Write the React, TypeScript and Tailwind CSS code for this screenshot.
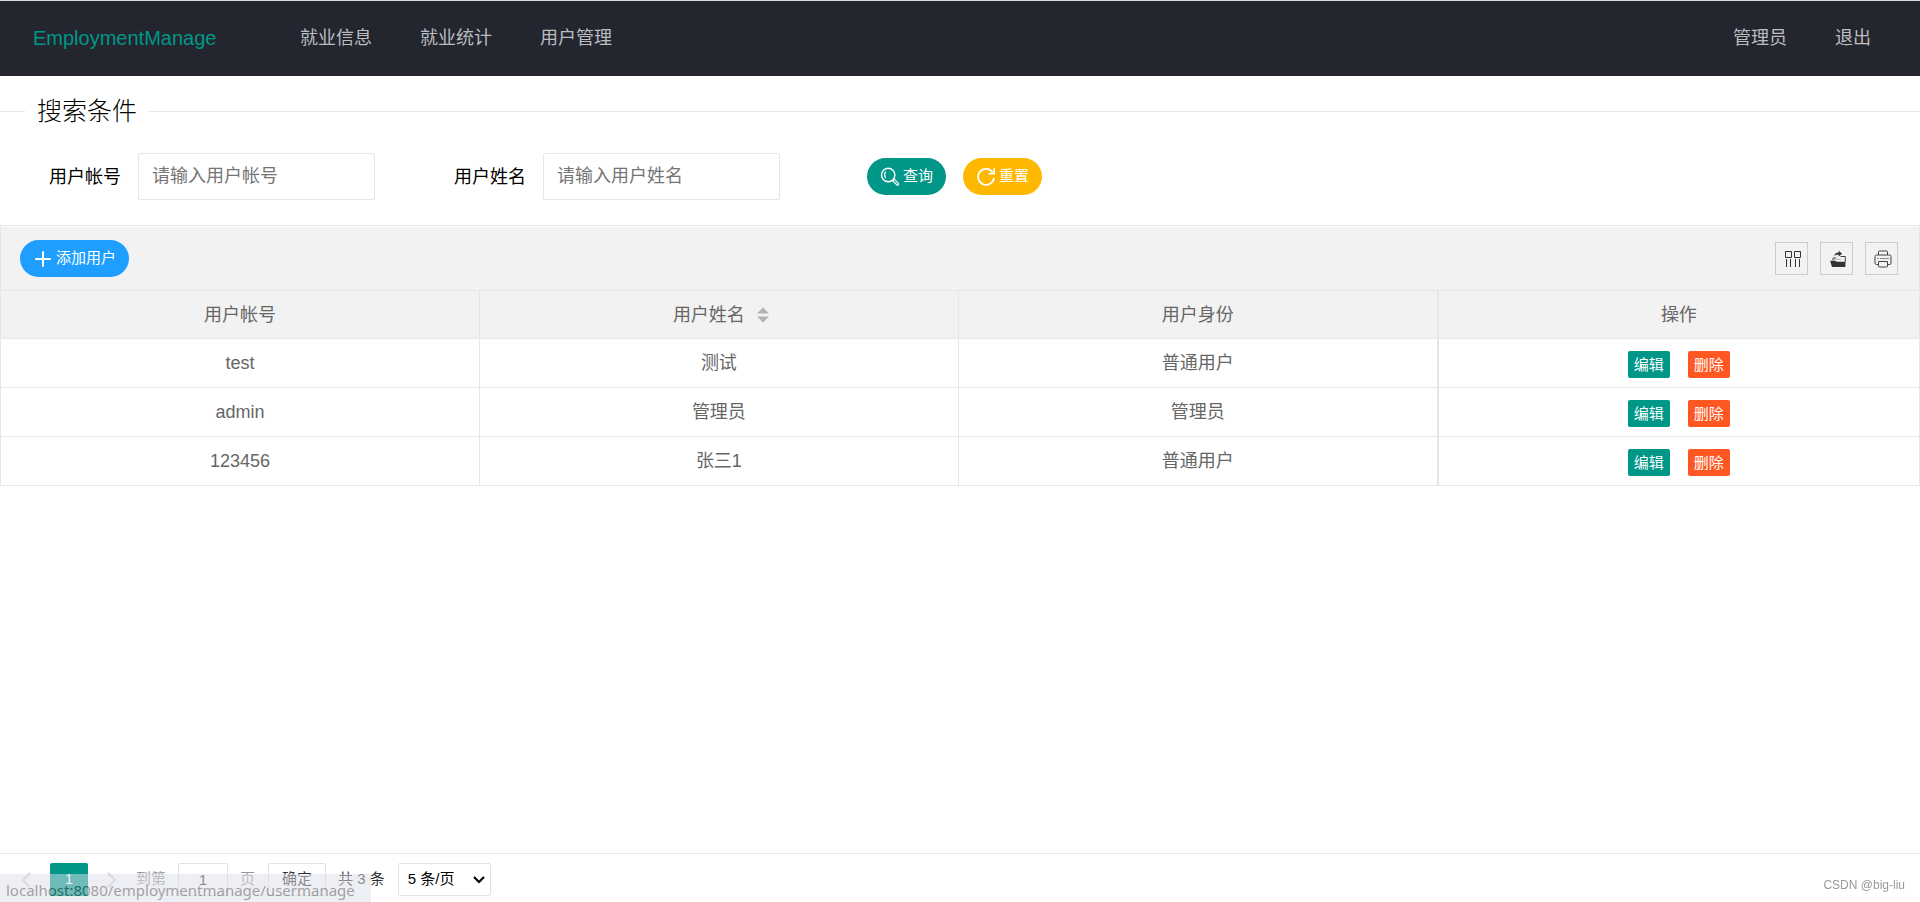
import React from 'react';

type User = { account: string; name: string; role: string };

const users: User[] = [
  { account: 'test', name: '测试', role: '普通用户' },
  { account: 'admin', name: '管理员', role: '管理员' },
  { account: '123456', name: '张三1', role: '普通用户' },
];

function SearchIcon() {
  return (
    <svg width="20" height="20" viewBox="0 0 20 20" fill="none" stroke="currentColor" strokeWidth="1.4" aria-hidden="true">
      <circle cx="8.2" cy="8" r="6.7" />
      <path d="M5.9 4.6C4.3 6.2 4.3 9.4 5.7 11.2" strokeWidth="1.2" />
      <path d="M13.2 13.2l1.2-1 4.1 4.4c.5.6-.9 1.9-1.5 1.4l-4.2-4.1z" strokeWidth="1.2" />
    </svg>
  );
}

function RefreshIcon() {
  return (
    <svg width="20" height="20" viewBox="0 0 20 20" fill="none" stroke="currentColor" strokeWidth="1.7" aria-hidden="true">
      <path d="M16.6 5.2A8 8 0 1 0 18 10.8" />
      <path d="M18.2 1.2v5.4h-5.6" />
    </svg>
  );
}

function PlusIcon() {
  return (
    <svg width="16" height="16" viewBox="0 0 16 16" stroke="currentColor" strokeWidth="2" strokeLinecap="round" aria-hidden="true">
      <path d="M1 8h14M8 1v14" />
    </svg>
  );
}

function ColumnsIcon() {
  return (
    <svg width="18" height="18" viewBox="0 0 18 18" fill="none" stroke="#333" strokeWidth="1" aria-hidden="true">
      <path d="M1.5 1.5h6v6h-6zM10.5 1.5h6v6h-6z" />
      <path d="M2.5 9v8M6.5 9v8M11.5 9v8M15.5 9v8" />
    </svg>
  );
}

function ExportIcon() {
  return (
    <svg width="18" height="18" viewBox="0 0 18 18" fill="none" aria-hidden="true">
      <path d="M1.2 10.8h5.2l1.4 1h8.6v4.4q0 .9-.9.9H3.7q-.8 0-1-.8z" fill="#333" />
      <path d="M4 10.2V8h3.2M11.5 6.5h4.8V12" stroke="#444" strokeWidth="1" />
      <path d="M5.2 6.4C5.6 3.6 7.4 2.5 9.6 2.5V.8l3.5 3-3.5 2.8V4.8C7.6 4.7 6.2 5 5.2 6.4z" fill="#333" />
      <path d="M5 9.3h7" stroke="#bbb" strokeWidth="1" />
    </svg>
  );
}

function PrintIcon() {
  return (
    <svg width="18" height="18" viewBox="0 0 18 18" fill="none" stroke="#444" strokeWidth="1" aria-hidden="true">
      <path d="M4.5 5V2q0-1 1-1h7q1 0 1 1v3" />
      <path d="M4.5 14.5h-2q-1.5 0-1.5-1.5V6.5q0-1.5 1.5-1.5h13q1.5 0 1.5 1.5V13q0 1.5-1.5 1.5h-2" />
      <path d="M4.5 11.5h9v4.5q0 1-1 1h-7q-1 0-1-1z" />
      <path d="M3 8.5h2M6 8.5h9" stroke="#888" />
    </svg>
  );
}

function SortIcon() {
  return (
    <svg width="12" height="16" viewBox="0 0 12 16" fill="#b2b2b2" aria-hidden="true">
      <path d="M0 6.5L6 .5l6 6zM0 9.5h12l-6 6z" />
    </svg>
  );
}

function Chevron({ d }: { d: string }) {
  return (
    <svg width="10" height="16" viewBox="0 0 10 16" fill="none" stroke="#d2d2d2" strokeWidth="1.8" aria-hidden="true">
      <path d={d} />
    </svg>
  );
}

const navLink = 'px-6 text-lg text-[#bdbdc0]';
const pill = 'flex h-[37px] items-center rounded-full text-[15px] text-white';
const field = 'h-[47px] w-[237px] rounded-xs border border-[#e6e6e6] bg-white px-[13px] text-lg text-black placeholder:text-[#757575] outline-none';
const toolButton = 'flex size-[33px] items-center justify-center border border-[#ccc]';
const cell = 'border-b border-r border-[#e6e6e6] text-center font-normal last:border-l last:border-r-0';
const rowButton = 'h-[27px] w-[42px] rounded-xs text-[15px] text-white';

export default function App() {
  return (
    <div className="flex min-h-screen flex-col bg-white font-['Liberation_Sans','Noto_Sans_CJK_SC',sans-serif] text-black">
      <header className="flex h-[76px] items-center border-t border-[#d5dedd] bg-[#23262e] pr-[25px] pb-0.5">
        <a href="#home" className="w-[276px] pl-[33px] text-xl text-[#009688]">EmploymentManage</a>
        <nav className="flex flex-1">
          <a href="#info" className={navLink}>就业信息</a>
          <a href="#stats" className={navLink}>就业统计</a>
          <a href="#users" className={navLink}>用户管理</a>
        </nav>
        <a href="#me" className={navLink}>管理员</a>
        <a href="#logout" className={navLink}>退出</a>
      </header>

      <main className="flex flex-1 flex-col">
        <fieldset className="mt-[17px] border-t border-[#e6e6e6]">
          <legend className="ml-[25px] px-3 text-[25px] leading-9 font-light">搜索条件</legend>
          <form className="flex items-center pt-6 pb-[25px] pl-[49px]" onSubmit={(e) => e.preventDefault()}>
            <div className="flex items-center gap-[17px]">
              <label htmlFor="account" className="text-lg">用户帐号</label>
              <input id="account" type="text" placeholder="请输入用户帐号" className={field} />
            </div>
            <div className="ml-[79px] flex items-center gap-[17px]">
              <label htmlFor="name" className="text-lg">用户姓名</label>
              <input id="name" type="text" placeholder="请输入用户姓名" className={field} />
            </div>
            <div className="ml-[87px] flex gap-[17px]">
              <button type="submit" className={pill + ' gap-[3px] bg-[#009688] px-[13px]'}>
                <SearchIcon />查询
              </button>
              <button type="reset" className={pill + ' gap-[3px] bg-[#ffb800] px-[13px]'}>
                <RefreshIcon />重置
              </button>
            </div>
          </form>
        </fieldset>

        <section className="flex flex-1 flex-col">
          <div className="border border-b-0 border-[#e6e6e6] pt-px">
            <div className="flex h-[64px] items-center justify-between border-b border-[#e6e6e6] bg-[#f2f2f2] pr-[21px] pl-[19px]">
              <button type="button" className={pill + ' gap-[5px] bg-[#1e9fff] pr-[13px] pl-[15px]'}>
                <PlusIcon />添加用户
              </button>
              <div className="flex gap-3">
                <button type="button" aria-label="筛选列" className={toolButton + ' pl-0.5'}><ColumnsIcon /></button>
                <button type="button" aria-label="导出" className={toolButton + ' pl-0.5'}><ExportIcon /></button>
                <button type="button" aria-label="打印" className={toolButton + ' pl-0.5'}><PrintIcon /></button>
              </div>
            </div>
            <table className="w-full table-fixed border-separate border-spacing-0 text-lg leading-7 text-[#666]">
              <colgroup>
                <col className="w-[24.97%]" />
                <col className="w-[24.97%]" />
                <col className="w-[24.97%]" />
                <col />
              </colgroup>
              <thead className="bg-[#f2f2f2]">
                <tr className="h-12">
                  <th className={cell}>用户帐号</th>
                  <th className={cell}>
                    <span className="flex items-center justify-center gap-3 pl-1">
                      用户姓名<SortIcon />
                    </span>
                  </th>
                  <th className={cell}>用户身份</th>
                  <th className={cell}>操作</th>
                </tr>
              </thead>
              <tbody>
                {users.map((u) => (
                  <tr key={u.account} className="h-[49px]">
                    <td className={cell}>{u.account}</td>
                    <td className={cell}>{u.name}</td>
                    <td className={cell}>{u.role}</td>
                    <td className={cell}>
                      <div className="flex justify-center gap-[18px] pt-0.5">
                        <button type="button" className={rowButton + ' bg-[#009688]'}>编辑</button>
                        <button type="button" className={rowButton + ' bg-[#ff5722]'}>删除</button>
                      </div>
                    </td>
                  </tr>
                ))}
              </tbody>
            </table>
          </div>

          <div className="mt-auto flex items-center border-t border-[#e6e6e6] pt-[9px] pb-[6px] pl-[21px] text-[15px] text-[#333]">
            <button type="button" aria-label="上一页"><Chevron d="M9 1L2 8l7 7" /></button>
            <span className="ml-[19px] flex h-[33px] w-[38px] items-center justify-center rounded-xs bg-[#009688] text-white">1</span>
            <button type="button" aria-label="下一页" className="ml-[19px]"><Chevron d="M1 1l7 7-7 7" /></button>
            <label htmlFor="page" className="ml-[19px] text-[#999]">到第</label>
            <input id="page" type="text" defaultValue="1" className="mx-3 h-[33px] w-[50px] rounded-xs border border-[#e2e2e2] text-center outline-none" />
            <span className="text-[#999]">页</span>
            <button type="button" className="ml-[13px] h-[33px] w-[58px] rounded-xs border border-[#e2e2e2]">确定</button>
            <span className="ml-3">共 3 条</span>
            <div className="relative ml-[13px]">
              <select aria-label="每页条数" className="h-[33px] w-[93px] appearance-none rounded-xs border border-[#e2e2e2] bg-white pl-[9px] text-black outline-none">
                <option>5 条/页</option>
              </select>
              <svg className="pointer-events-none absolute top-3 right-[6px]" width="12" height="10" viewBox="0 0 12 10" fill="none" stroke="#000" strokeWidth="2.2" aria-hidden="true">
                <path d="M1 2l5 5 5-5" />
              </svg>
            </div>
          </div>
        </section>
      </main>

      <div className="fixed bottom-0 left-0 h-7 rounded-tr-xs bg-[#dde0e9] pr-4 pl-[6px] font-['Noto_Sans',sans-serif] text-[15px] leading-8 text-[#444] opacity-50">
        localhost:8080/employmentmanage/usermanage
      </div>
      <div className="fixed right-[15px] bottom-2 text-xs leading-[18px] text-[#999]">CSDN @big-liu</div>
    </div>
  );
}
